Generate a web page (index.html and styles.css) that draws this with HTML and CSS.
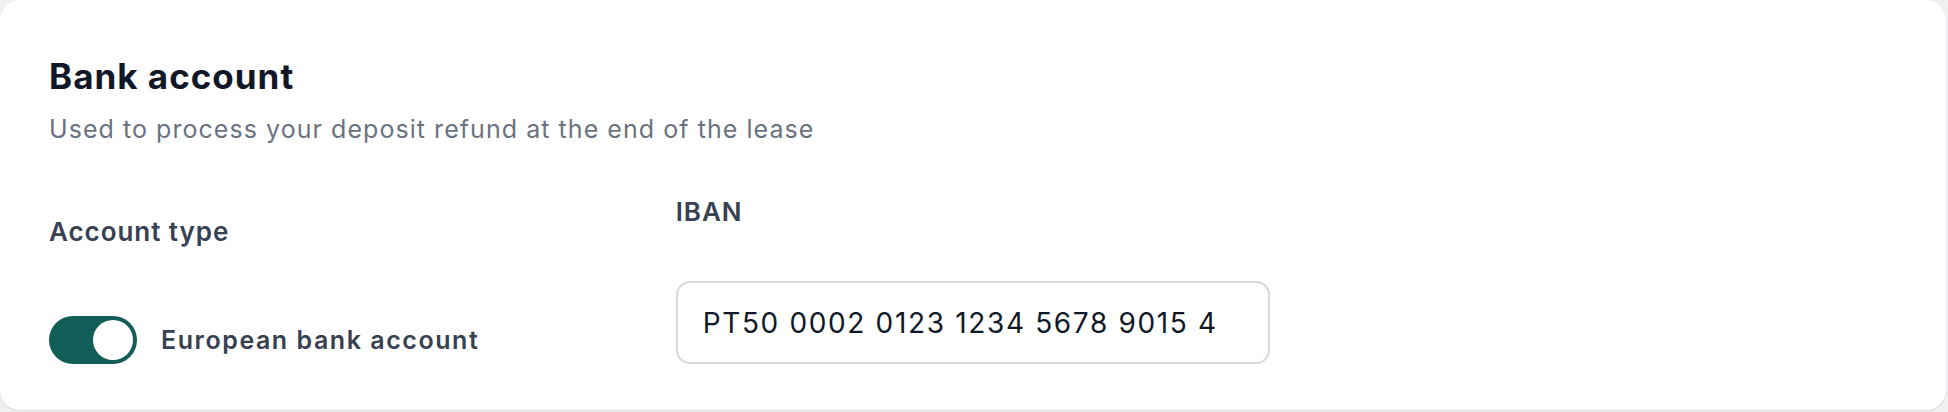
FILE: index.html
```html
<!DOCTYPE html>
<html lang="en">
<head>
<meta charset="utf-8">
<title>Bank account</title>
<link rel="stylesheet" href="styles.css">
</head>
<body>
  <section class="card">
    <h2 class="card-title">Bank account</h2>
    <p class="card-subtitle">Used to process your deposit refund at the end of the lease</p>
    <div class="fields">
      <div class="field field-type">
        <span class="field-label">Account type</span>
        <label class="toggle-row">
          <span class="toggle is-on"><span class="toggle-knob"></span></span>
          <span class="toggle-text">European bank account</span>
        </label>
      </div>
      <div class="field field-iban">
        <span class="field-label field-label-iban">IBAN</span>
        <input class="text-input" type="text" value="PT50 0002 0123 1234 5678 9015 4">
      </div>
    </div>
  </section>
</body>
</html>
```

FILE: styles.css
```css
* {
  box-sizing: border-box;
}

html, body {
  margin: 0;
  padding: 0;
}

body {
  background: #eef0f2;
  font-family: Inter, "Noto Sans", "Liberation Sans", sans-serif;
  width: 1948px;
  height: 412px;
  overflow: hidden;
}

.card {
  width: 1946px;
  height: 410px;
  background: #ffffff;
  border-radius: 20px;
  box-shadow: 0 1px 2px rgba(16, 24, 40, 0.10);
  padding: 56px 49px 0 49px;
}

.card-title {
  margin: 0;
  font-size: 35px;
  line-height: 40px;
  font-weight: 700;
  color: #111827;
  letter-spacing: 1px;
}

.card-subtitle {
  margin: 17px 0 0 0;
  font-size: 25px;
  line-height: 32px;
  font-weight: 400;
  color: #6b7280;
  letter-spacing: 1.05px;
}

.fields {
  display: grid;
  grid-template-columns: repeat(3, 1fr);
  column-gap: 32px;
  margin-top: 51px;
}

.field {
  display: flex;
  flex-direction: column;
}

.field-label {
  font-size: 26px;
  line-height: 32px;
  font-weight: 600;
  color: #374151;
  letter-spacing: 0.95px;
}

.field-type {
  padding-top: 20px;
}

.toggle-row {
  display: flex;
  align-items: center;
  gap: 24px;
  margin-top: 68px;
}

.toggle {
  width: 88px;
  height: 48px;
  border-radius: 24px;
  background: #115e59;
  display: flex;
  align-items: center;
  padding: 4px;
  flex-shrink: 0;
}

.toggle.is-on {
  justify-content: flex-end;
}

.toggle-knob {
  width: 40px;
  height: 40px;
  border-radius: 50%;
  background: #ffffff;
}

.toggle-text {
  font-size: 25px;
  line-height: 32px;
  font-weight: 600;
  color: #374151;
  letter-spacing: 1.55px;
}

.text-input {
  margin-top: 53px;
  width: 100%;
  height: 83px;
  border: 2px solid #d5d8dd;
  border-radius: 14px;
  padding: 0 25px;
  font-family: inherit;
  font-size: 28px;
  font-weight: 400;
  letter-spacing: 1.65px;
  color: #111827;
  background: #ffffff;
  outline: none;
}
```
